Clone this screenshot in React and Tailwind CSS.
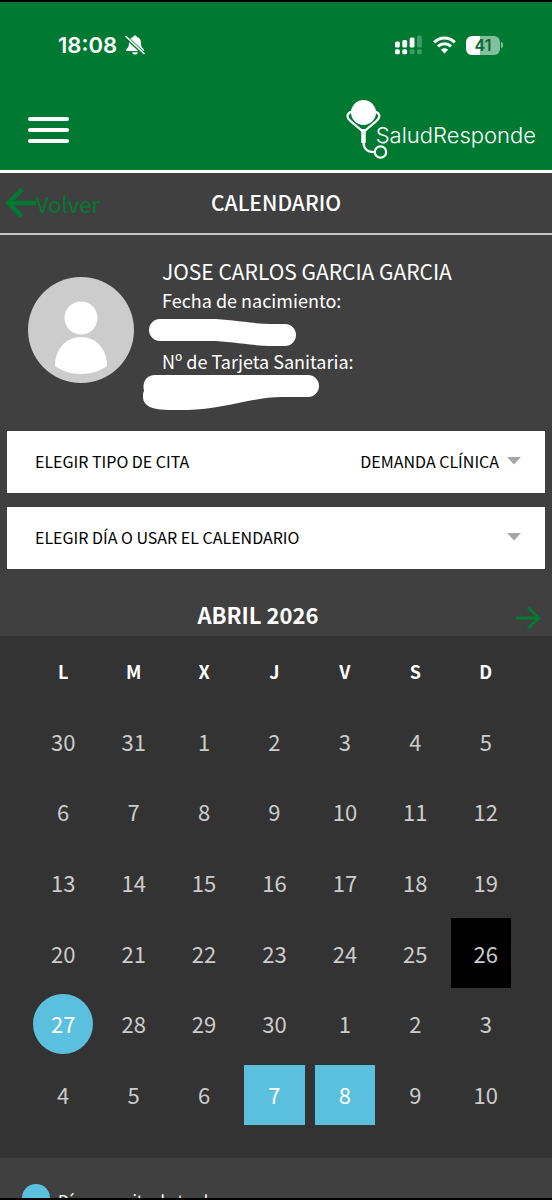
import React, { useState } from 'react';

const weekDays = ['L', 'M', 'X', 'J', 'V', 'S', 'D'];

const weeks = [
    [30, 31, 1, 2, 3, 4, 5],
    [6, 7, 8, 9, 10, 11, 12],
    [13, 14, 15, 16, 17, 18, 19],
    [20, 21, 22, 23, 24, 25, 26],
    [27, 28, 29, 30, 1, 2, 3],
    [4, 5, 6, 7, 8, 9, 10],
];

// 'week-day' positions of the marked days
const marks = { '3-6': 'today', '4-0': 'afternoon', '5-3': 'free', '5-4': 'free' };

const dayStyles = {
    today: 'h-[70px] pl-[10px] bg-black text-[#cccccc]',
    afternoon: 'h-[60px] rounded-full bg-[#5bc0de] text-white',
    free: 'h-[60px] bg-[#5bc0de] text-white',
};

function StatusBar() {
    return (
        <div className="flex items-center justify-between pl-[58px] pr-[49px] pt-[27px]">
            <div className="flex items-center gap-2 font-['Inter',sans-serif] text-[22px] leading-8 font-semibold text-white">
                18:08
                <svg viewBox="0 0 20 20" className="size-5" fill="white">
                    <path d="M10 0.5c-1 0-1.7.6-1.9 1.5C5.400 2.700 4 4.900 4 7.700c0 3.500-.8 4.800-2.200 6.100-.5.500-.8.900-.8 1.300 0 .6.500.9 1.200.9h15.600c.7 0 1.200-.3 1.200-.9 0-.4-.3-.8-.8-1.300C16.800 12.500 16 11.200 16 7.700c0-2.800-1.400-5-4.100-5.700C11.700 1.100 11 .5 10 .5zM7.200 17.200c.3 1.400 1.400 2.300 2.800 2.300s2.500-.9 2.800-2.300z" />
                    <path d="M0.500 1.500L19 19" stroke="#007a33" strokeWidth="3.600" />
                    <path d="M1 1.500L19 18.500" stroke="white" strokeWidth="1.600" strokeLinecap="round" />
                </svg>
            </div>
            <div className="flex items-center gap-[10px]">
                <svg viewBox="0 0 28 20" className="h-5 w-7" fill="white">
                    <rect x="0" y="6.500" width="4.800" height="6" rx="1.500" />
                    <rect x="7.300" y="5" width="4.800" height="7.500" rx="1.500" />
                    <rect x="14.700" y="2.500" width="4.800" height="10" rx="1.500" />
                    <rect x="22" y="0.500" width="4.800" height="12" rx="1.500" opacity=".25" />
                    <rect x="0" y="14.300" width="4.800" height="5" rx="1.500" />
                    <rect x="7.300" y="14.300" width="4.800" height="5" rx="1.500" />
                    <rect x="14.700" y="14.300" width="4.800" height="5" rx="1.500" opacity=".25" />
                    <rect x="22" y="14.300" width="4.800" height="5" rx="1.500" opacity=".25" />
                </svg>
                <svg viewBox="0 0 23 18" className="h-[18px] w-[23px]" fill="none" stroke="white" strokeWidth="3">
                    <path d="M1.200 6.400C7 .6 16 .6 21.800 6.400" />
                    <path d="M5 10.300c3.700-3.500 9.300-3.500 13 0" />
                    <path d="M11.500 17.500l-3.600-3.700c2-2 5.200-2 7.200 0z" fill="white" stroke="none" />
                </svg>
                <div className="flex items-center gap-px">
                    <div className="flex h-[19px] w-[34px] items-center justify-center rounded-md bg-linear-to-r from-white from-42% to-[#85c09c] to-42% font-['Inter',sans-serif] text-base font-semibold text-[#0b6b33]">
                        41
                    </div>
                    <div className="h-[6px] w-[2px] rounded-r-full bg-[#85c09c]" />
                </div>
            </div>
        </div>
    );
}

function Logo() {
    return (
        <a href="#inicio" className="flex items-start text-white">
            <svg viewBox="0 0 42 62" className="-mr-3 h-[62px] w-[42px]" fill="none" stroke="white" strokeLinecap="round">
                <circle cx="17.500" cy="13.500" r="12.500" fill="white" stroke="none" />
                <path d="M4.500 13C1.800 14.500.8 16.500 2 19c.5 1.200 1.700 2.300 2.800 3.300L17.500 33 30 22.300c1.100-1 2.300-2.100 2.800-3.300 1.200-2.500.2-4.500-2.500-6" strokeWidth="2.200" strokeLinejoin="round" />
                <path d="M17.500 32v12" strokeWidth="4.500" strokeLinecap="butt" />
                <path d="M14 30.500h7L17.500 34z" fill="white" strokeWidth="1" />
                <path d="M17.500 43c0 6.500 3.500 10 10.500 10.200" strokeWidth="2.200" />
                <circle cx="34.500" cy="53" r="5.700" strokeWidth="2.200" />
            </svg>
            <span className="pt-[22px] font-['Inter',sans-serif] text-[22px] leading-7 font-light">SaludResponde</span>
        </a>
    );
}

function SelectRow({ id, label, options }) {
    return (
        <div className="flex h-[62px] items-center justify-between bg-white pb-[2px] pl-7 pr-6 text-black">
            <label htmlFor={id}>{label}</label>
            <div className="flex items-center gap-2">
                <select id={id} className="min-w-8 appearance-none bg-transparent text-right outline-none">
                    {options.map(option => (
                        <option key={option} value={option}>{option}</option>
                    ))}
                </select>
                <svg viewBox="0 0 14 8" className="h-2 w-[14px]" fill="#a6a6a6">
                    <path d="M0 0h14L7 7.500z" />
                </svg>
            </div>
        </div>
    );
}

function Calendar() {
    const [selected, setSelected] = useState(null);

    return (
        <div className="bg-[#333333] pr-[31px] pb-7 pl-7">
            <table className="h-[494px] w-full table-fixed border-collapse text-center">
                <thead>
                    <tr>
                        {weekDays.map(day => (
                            <th key={day} scope="col" className="h-[70px] p-0 text-lg font-bold">{day}</th>
                        ))}
                    </tr>
                </thead>
                <tbody className="text-[22px]">
                    {weeks.map((week, w) => (
                        <tr key={w}>
                            {week.map((day, d) => {
                                const key = `${w}-${d}`;
                                const mark = marks[key];
                                return (
                                    <td key={key} className={mark === 'today' ? 'h-[70px] p-0 pr-[10px]' : 'h-[70px] px-[5px] py-0'}>
                                        <button
                                            type="button"
                                            aria-pressed={selected === key}
                                            onClick={() => setSelected(key)}
                                            className={`block w-full ${dayStyles[mark] || 'h-[60px] text-[#cccccc]'}`}
                                        >
                                            {day}
                                        </button>
                                    </td>
                                );
                            })}
                        </tr>
                    ))}
                </tbody>
            </table>
        </div>
    );
}

export default function App() {
    return (
        <div className="flex h-screen flex-col border-y-2 border-black bg-[#404040] font-['Noto_Sans_CJK_SC',sans-serif] text-white">
            <header className="shrink-0 border-b-3 border-white bg-[#007a33] pb-[9px]">
                <StatusBar />
                <div className="flex items-center justify-between pt-[38px] pr-4 pl-7">
                    <button type="button" aria-label="Menú" className="flex w-[41px] flex-col gap-[7px]">
                        <span className="h-1 w-full rounded-full bg-white" />
                        <span className="h-1 w-full rounded-full bg-white" />
                        <span className="h-1 w-full rounded-full bg-white" />
                    </button>
                    <Logo />
                </div>
            </header>

            <main className="min-h-0 flex-1 overflow-y-auto [scrollbar-width:none]">
                <div className="grid h-[62px] grid-cols-[1fr_auto_1fr] items-center border-b-2 border-[#c8c8c8] px-[6px]">
                    <a href="#volver" className="flex items-center text-[22px] text-[#007a33]">
                        <svg viewBox="0 0 30 30" className="size-[30px]" fill="none" stroke="currentColor" strokeWidth="4.500">
                            <path d="M30 15H3M16 1.500L2.500 15 16 28.500" />
                        </svg>
                        Volver
                    </a>
                    <h1 className="text-[21px] font-medium">CALENDARIO</h1>
                </div>

                <section className="flex items-start pt-[22px] pl-7">
                    <svg viewBox="0 0 106 106" className="mt-5 size-[106px] shrink-0">
                        <circle cx="53" cy="53" r="53" fill="#cccccc" />
                        <circle cx="53" cy="41" r="16.500" fill="white" />
                        <path d="M27 89C27 72 38 60 53 60s26 12 26 29c-7 5-16 8-26 8s-19-3-26-8z" fill="white" />
                    </svg>
                    <div className="pl-2">
                        <h2 className="pl-5 text-[21px] leading-7">JOSE CARLOS GARCIA GARCIA</h2>
                        <p className="pl-5 text-lg leading-[30px]">Fecha de nacimiento:</p>
                        <svg viewBox="0 0 178 28" className="mt-1 h-7 w-[178px]" fill="white">
                            <path d="M18 0H68C90 0 108 5 133 5H143A11 11 0 0 1 143 27H133C108 27 90 22 68 22H18A11 11 0 0 1 18 0z" />
                        </svg>
                        <p className="pl-5 text-lg leading-7">Nº de Tarjeta Sanitaria:</p>
                        <svg viewBox="0 0 178 36" className="h-9 w-[178px]" fill="white">
                            <path d="M13 0H166A11 11 0 0 1 166 22H140C110 22 80 35 45 35H28C10 35 1 31 1 22C1 19 1 18 2 16C0 8 4 0 13 0z" />
                        </svg>
                    </div>
                </section>

                <section className="flex flex-col gap-[14px] px-[7px] pt-5 text-base">
                    <SelectRow id="tipo" label="ELEGIR TIPO DE CITA" options={['DEMANDA CLÍNICA']} />
                    <SelectRow id="dia" label="ELEGIR DÍA O USAR EL CALENDARIO" options={['']} />
                </section>

                <div className="flex h-[67px] items-end pr-3 pb-1">
                    <h2 className="flex-1 text-center text-[22px] leading-9 font-bold">ABRIL 2026</h2>
                    <button type="button" aria-label="Mes siguiente" className="pb-[2px] text-[#007a33]">
                        <svg viewBox="0 0 24 24" className="size-6" fill="none" stroke="currentColor" strokeWidth="3">
                            <path d="M0 12h22M12 1.500L22.500 12 12 22.500" />
                        </svg>
                    </button>
                </div>

                <Calendar />

                <div className="flex items-end gap-2 py-[26px] pl-[22px] text-base">
                    <span className="size-7 rounded-full bg-[#5bc0de]" />
                    Días con cita de tarde
                </div>
            </main>
        </div>
    );
}
